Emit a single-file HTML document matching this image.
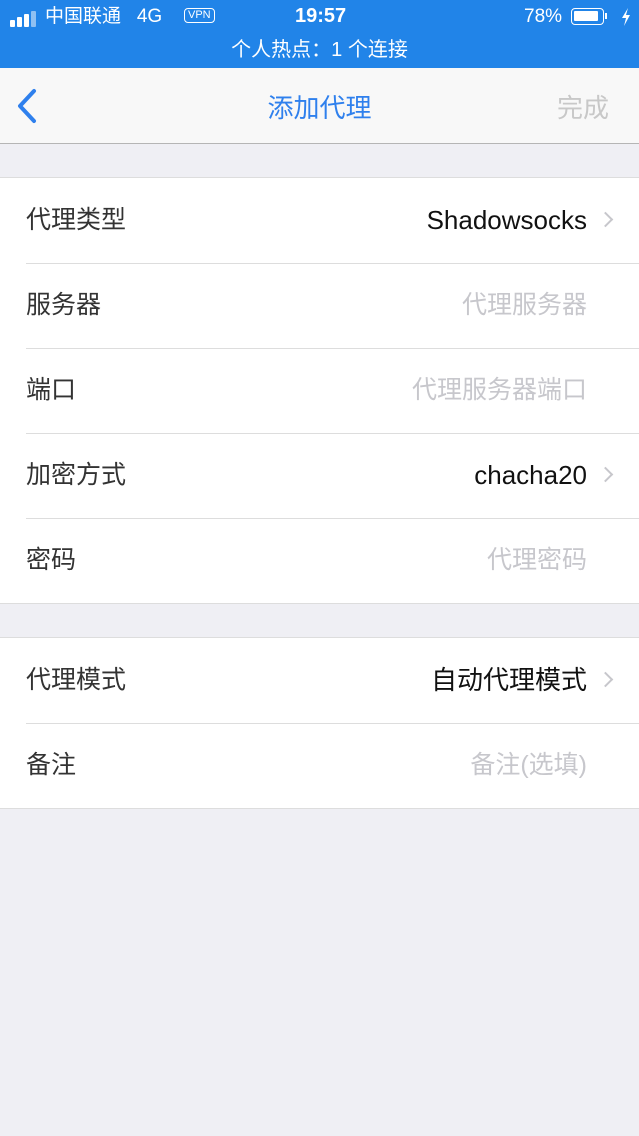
<!DOCTYPE html>
<html><head><meta charset="utf-8"><style>
*{margin:0;padding:0;box-sizing:border-box}
body{width:639px;height:1136px;background:#efeff4;font-family:"Liberation Sans","Noto Sans CJK SC",sans-serif;position:relative;overflow:hidden}
.sb{position:absolute;left:0;top:0;width:639px;height:68px;background:#2184e8;color:#fff}
.sb div{position:absolute;white-space:nowrap}
.nav{position:absolute;top:68px;left:0;width:639px;height:76px;background:#f8f8f8;border-bottom:1px solid #b5b5b5}
.grp{position:absolute;left:0;width:639px;background:#fff;border-top:1px solid #ddd;border-bottom:1px solid #ddd}
.row{position:relative;height:85px;font-size:25px;color:#333;line-height:84px}
.row+.row:before{content:"";position:absolute;left:26px;right:0;top:0;border-top:1px solid #ddd}
.l{position:absolute;left:26px;top:0}
.r{position:absolute;right:52px;top:0;color:#111;font-size:26px}
.p{position:absolute;right:52px;top:0;color:#c7c7cc}
.ch{position:absolute;right:28px;top:36px;width:11px;height:11px;border-right:2px solid #c7c7cc;border-top:2px solid #c7c7cc;transform:rotate(45deg)}
</style></head><body>
<div class="sb">
<div style="left:10px;top:9px;height:15px">
<span style="display:inline-block;vertical-align:bottom;width:5px;height:7px;background:#fff;margin-right:2px;border-radius:1px"></span><span style="display:inline-block;vertical-align:bottom;width:5px;height:10px;background:#fff;margin-right:2px;border-radius:1px"></span><span style="display:inline-block;vertical-align:bottom;width:5px;height:13px;background:#fff;margin-right:2px;border-radius:1px"></span><span style="display:inline-block;vertical-align:bottom;width:5px;height:16px;background:#8fc0f2;border-radius:1px"></span></div>
<div style="left:45px;top:5px;font-size:19px;line-height:24px">中国联通&nbsp;&nbsp;&nbsp;4G</div>
<div style="left:184px;top:8px;font-size:11px;border:1.5px solid #fff;border-radius:4px;padding:0 3px;line-height:13px">VPN</div>
<div style="left:295px;top:4px;font-size:20px;line-height:24px;font-weight:bold">19:57</div>
<div style="left:524px;top:5px;font-size:19px;line-height:24px">78%</div>
<div style="left:571px;top:8px;width:33px;height:17px;border:1.5px solid #fff;border-radius:4px"><div style="left:2px;top:2px;width:24px;height:10px;background:#fff;border-radius:1px"></div></div>
<div style="left:605px;top:13px;width:2px;height:6px;background:#fff"></div>
<svg style="position:absolute;left:620px;top:8px" width="12" height="18"><path d="M8 0 L2 10 L6 10 L4 18 L10 7 L6 7 Z" fill="#fff"/></svg>
<div style="left:0;width:639px;text-align:center;top:36px;font-size:20px;line-height:28px">个人热点：1 个连接</div>
</div>
<div class="nav">
<svg style="position:absolute;left:12px;top:20px" width="30" height="36"><path d="M22 3 L8 18 L22 33" stroke="#2f80ed" stroke-width="4" fill="none" stroke-linecap="round" stroke-linejoin="round"/></svg>
<div style="position:absolute;left:0;width:639px;text-align:center;top:20px;font-size:26px;color:#2f80ed">添加代理</div>
<div style="position:absolute;right:30px;top:20px;font-size:26px;color:#c8c8c8">完成</div>
</div>
<div class="grp" style="top:177px">
<div class="row"><span class="l">代理类型</span><span class="r">Shadowsocks</span><i class="ch"></i></div>
<div class="row"><span class="l">服务器</span><span class="p">代理服务器</span></div>
<div class="row"><span class="l">端口</span><span class="p">代理服务器端口</span></div>
<div class="row"><span class="l">加密方式</span><span class="r">chacha20</span><i class="ch"></i></div>
<div class="row"><span class="l">密码</span><span class="p">代理密码</span></div>
</div>
<div class="grp" style="top:637px">
<div class="row"><span class="l">代理模式</span><span class="r">自动代理模式</span><i class="ch"></i></div>
<div class="row"><span class="l">备注</span><span class="p">备注(选填)</span></div>
</div>
</body></html>
